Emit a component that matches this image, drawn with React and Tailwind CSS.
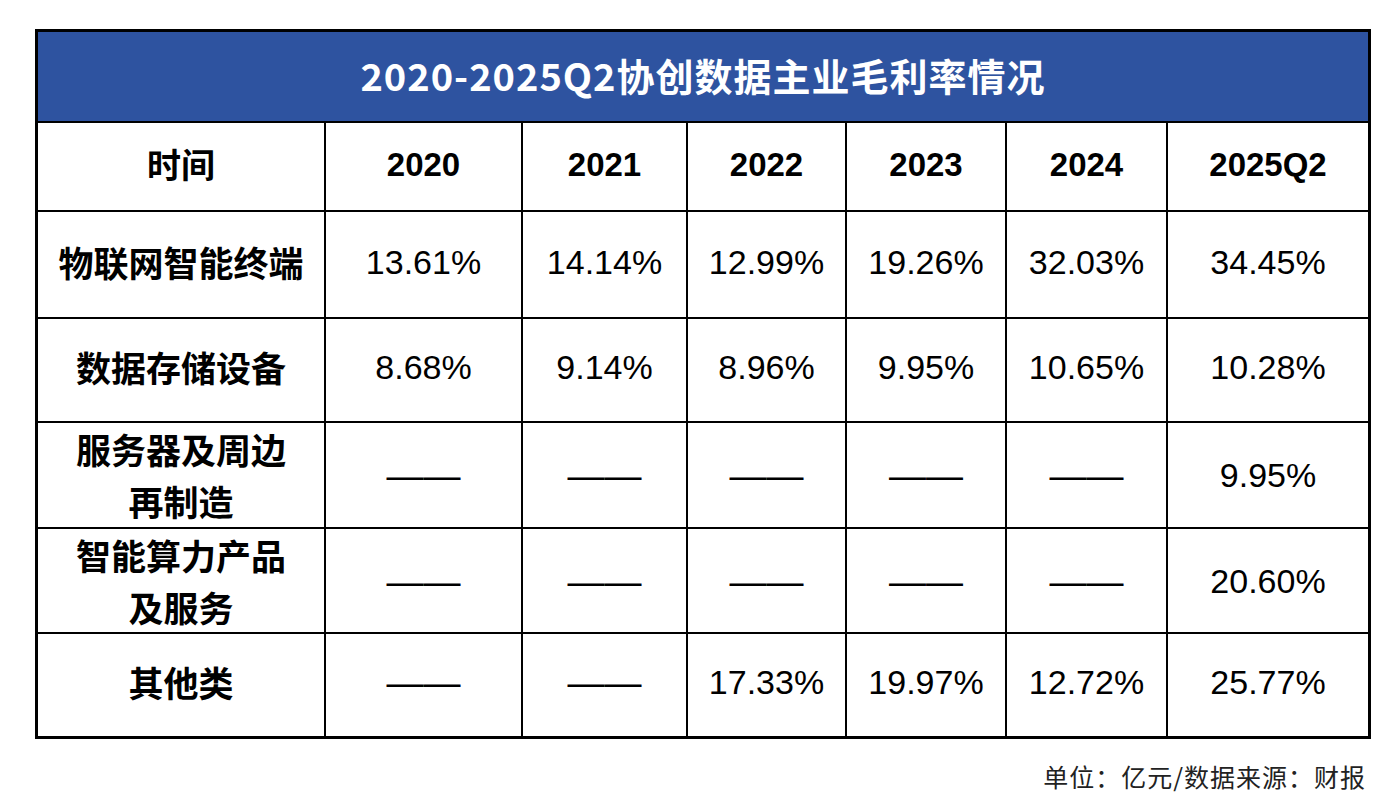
const cols = "grid grid-cols-[288px_197px_165px_159px_160px_161px_200px]";

const rows = [
  { label: ["物联网智能终端"], h: "h-[107px]", vals: ["13.61%", "14.14%", "12.99%", "19.26%", "32.03%", "34.45%"] },
  { label: ["数据存储设备"], h: "h-[104px]", vals: ["8.68%", "9.14%", "8.96%", "9.95%", "10.65%", "10.28%"] },
  { label: ["服务器及周边", "再制造"], h: "h-[106px]", vals: ["", "", "", "", "", "9.95%"] },
  { label: ["智能算力产品", "及服务"], h: "h-[105px]", vals: ["", "", "", "", "", "20.60%"] },
  { label: ["其他类"], h: "h-[104px]", vals: ["", "", "17.33%", "19.97%", "12.72%", "25.77%"] },
];

const years = ["2020", "2021", "2022", "2023", "2024", "2025Q2"];

const cjk = "font-['Noto_Sans_CJK_SC',sans-serif]";
const latin = "font-['Liberation_Sans','Noto_Sans_CJK_SC',sans-serif]";

function Cell({ children, last, className = "" }) {
  return (
    <div
      className={`flex items-center justify-center text-center ${last ? "" : "border-r-2 border-black"} ${className}`}
    >
      {children}
    </div>
  );
}

export default function App() {
  return (
    <div className="w-[1400px] h-[810px] bg-white pt-[29px] pl-[35px]">
      <div className="w-[1336px] border-[3px] border-black">
        <div className={`h-[89px] pb-[4px] bg-[#2e53a0] flex items-center justify-center text-white text-[38px] tracking-[1px] font-bold ${cjk}`}>
          2020-2025Q2协创数据主业毛利率情况
        </div>

        <div className={`${cols} h-[89px] border-t-2 border-black`}>
          <Cell className={`pb-[6px] text-[34px] font-bold text-black ${cjk}`}>时间</Cell>
          {years.map((y, i) => (
            <Cell key={y} last={i === years.length - 1} className={`pb-[4px] text-[33px] font-bold text-black ${latin}`}>
              {y}
            </Cell>
          ))}
        </div>

        {rows.map((r) => (
          <div key={r.label.join("")} className={`${cols} ${r.h} border-t-2 border-black`}>
            <Cell className={`flex-col pb-[6px] text-[35px] leading-[52px] font-bold text-black ${cjk}`}>
              {r.label.map((l) => (
                <span key={l}>{l}</span>
              ))}
            </Cell>
            {r.vals.map((v, i) => (
              <Cell key={i} last={i === r.vals.length - 1} className={`pb-[5px] text-[34px] text-black ${latin}`}>
                {v === "" ? <span className="text-[37px]">——</span> : v}
              </Cell>
            ))}
          </div>
        ))}
      </div>

      <div className={`w-[1331px] mt-[22px] text-right text-[25px] tracking-[1px] leading-[30px] text-[#222] ${cjk}`}>
        单位：亿元/数据来源：财报
      </div>
    </div>
  );
}
